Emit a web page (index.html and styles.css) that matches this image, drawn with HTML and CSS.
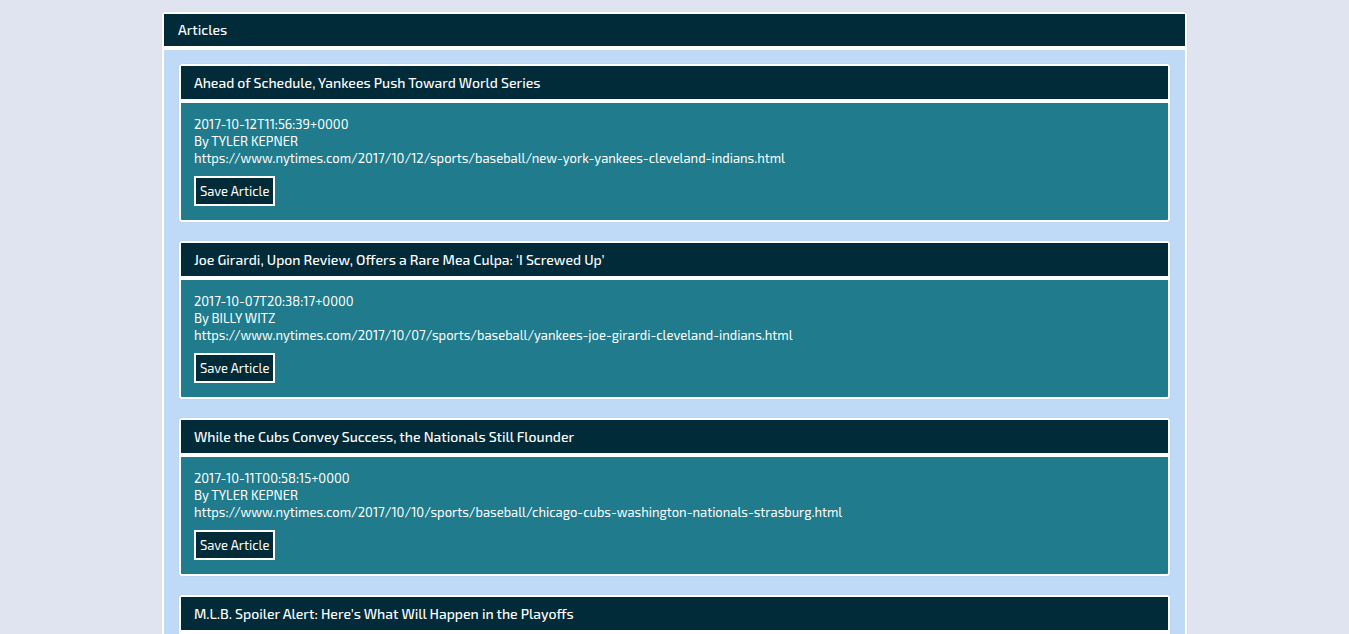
FILE: index.html
```html
<!DOCTYPE html>
<html lang="en">
<head>
<meta charset="utf-8">
<title>Articles</title>
<link rel="stylesheet" href="styles.css">
</head>
<body>
<main class="panel">
  <h1 class="panel-heading">Articles</h1>
  <div class="panel-body">
    <article class="card">
      <h2 class="card-heading">Ahead of Schedule, Yankees Push Toward World Series</h2>
      <div class="card-body">
        <p>2017-10-12T11:56:39+0000</p>
        <p>By TYLER KEPNER</p>
        <p>https://www.nytimes.com/2017/10/12/sports/baseball/new-york-yankees-cleveland-indians.html</p>
        <button class="save" type="button">Save Article</button>
      </div>
    </article>
    <article class="card">
      <h2 class="card-heading">Joe Girardi, Upon Review, Offers a Rare Mea Culpa: ‘I Screwed Up’</h2>
      <div class="card-body">
        <p>2017-10-07T20:38:17+0000</p>
        <p>By BILLY WITZ</p>
        <p>https://www.nytimes.com/2017/10/07/sports/baseball/yankees-joe-girardi-cleveland-indians.html</p>
        <button class="save" type="button">Save Article</button>
      </div>
    </article>
    <article class="card">
      <h2 class="card-heading">While the Cubs Convey Success, the Nationals Still Flounder</h2>
      <div class="card-body">
        <p>2017-10-11T00:58:15+0000</p>
        <p>By TYLER KEPNER</p>
        <p>https://www.nytimes.com/2017/10/10/sports/baseball/chicago-cubs-washington-nationals-strasburg.html</p>
        <button class="save" type="button">Save Article</button>
      </div>
    </article>
    <article class="card">
      <h2 class="card-heading">M.L.B. Spoiler Alert: Here’s What Will Happen in the Playoffs</h2>
      <div class="card-body"></div>
    </article>
  </div>
</main>
</body>
</html>
```
FILE: styles.css
```css
* { box-sizing: border-box; }
html { scrollbar-width: none; }
body {
  margin: 0;
  padding: 12px 0;
  background: #e0e4f0;
  color: #fff;
  font-family: "Exo 2", Roboto, "Liberation Sans", sans-serif;
  font-size: 13px;
  line-height: 17px;
}
.panel, .card {
  border: 2px solid #fff;
  border-radius: 3px;
  box-shadow: 0 0 1px rgba(0, 0, 0, 0.2);
}
.panel {
  width: 76%;
  margin: 0 auto;
  background: #bfdaf7;
}
.panel-heading, .card-heading {
  margin: 0;
  background: #022b39;
  border-bottom: 4px solid #fff;
  font-size: 14px;
  font-weight: 500;
}
.panel-heading { padding: 8px 14px; line-height: 16px; }
.card-heading { padding: 8px 13px; }
.panel-body {
  display: flex;
  flex-direction: column;
  gap: 19px;
  padding: 14px 15px;
}
.card { background: #207b8c; }
.card-body { padding: 13px 13px 14px; }
.card-body p { margin: 0; overflow-wrap: anywhere; }
.save {
  display: block;
  height: 30px;
  margin-top: 9px;
  padding: 0 4px;
  border: 2px solid #fff;
  background: #022b39;
  color: #fff;
  font: inherit;
  cursor: pointer;
}
```
